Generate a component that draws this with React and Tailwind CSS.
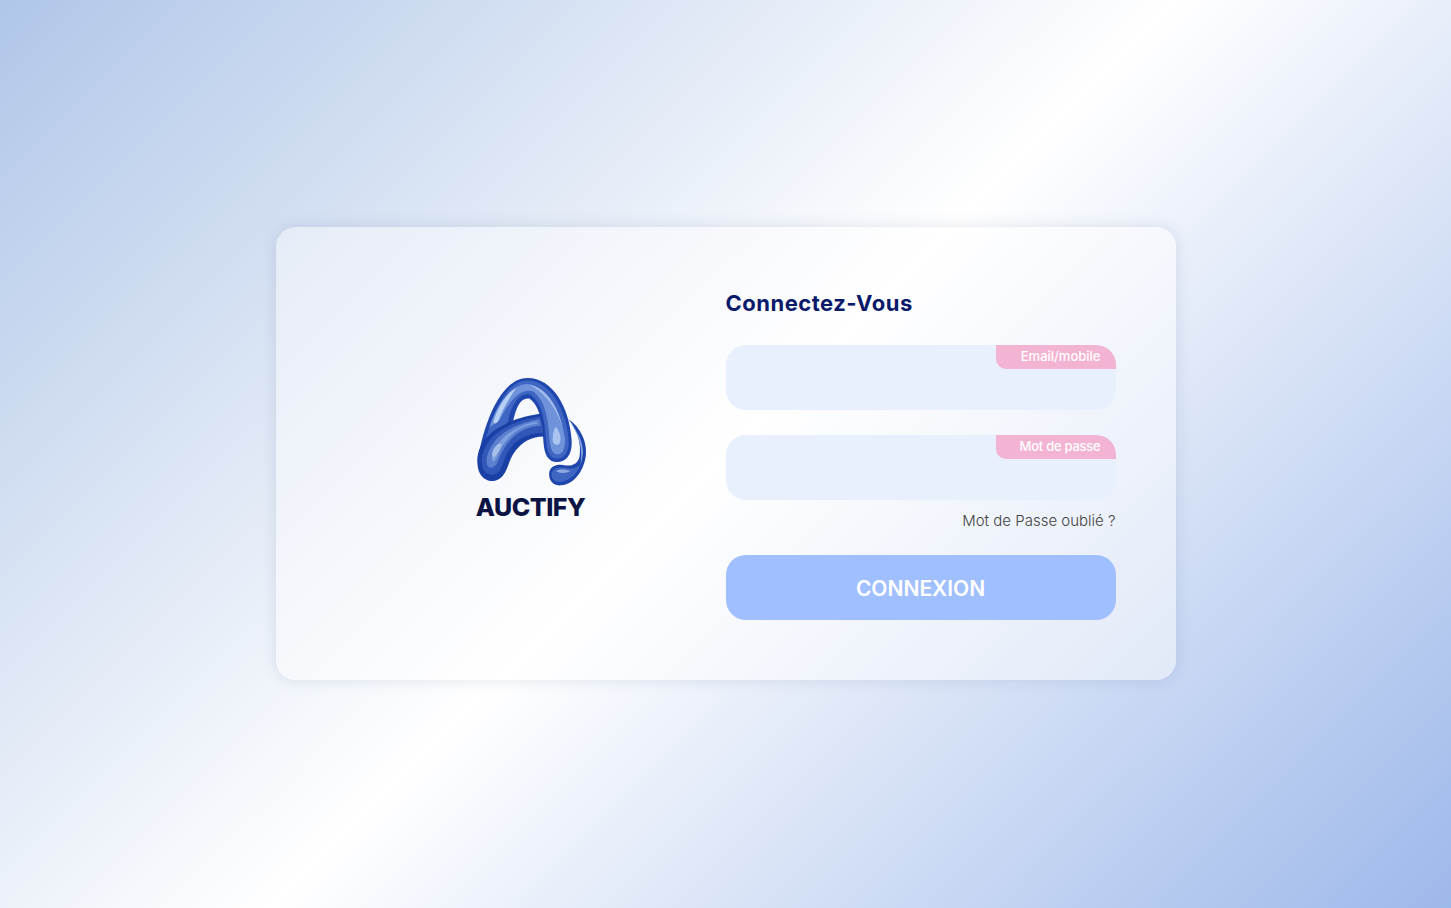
import React from 'react';

const font = "font-['Inter','Noto_Sans',sans-serif]";

const Logo = () => (
  <svg viewBox="0 0 420 370" className="h-[123px] w-[140px]">
    {/* ribbon and drop */}
    <path d="M322 165C358 190 380 235 375 275C370 315 345 360 300 365C272 367 262 345 265 325C270 305 290 300 315 305C335 308 350 300 356 280C362 240 350 200 322 165Z" fill="#1d45ab" />
    <path d="M330 180C352 205 368 240 366 270C364 285 362 295 358 305C366 270 360 220 330 180Z" fill="#8aa6e4" />
    <path d="M272 328C276 312 300 308 325 314C340 316 350 310 358 302C350 330 325 352 298 355C280 356 270 345 272 328Z" fill="#3f66c2" />
    <path d="M285 322C295 315 315 316 330 322C315 330 295 330 285 322Z" fill="#8fa9e3" />
    {/* arch and right leg */}
    <path d="M50 290C65 190 115 42 200 42C275 42 325 130 332 225C336 270 318 295 288 295C262 295 250 272 248 240C245 195 242 130 205 104C178 100 165 130 155 178Z" fill="#1f47ad" />
    <path d="M70 240C90 165 130 50 200 50C265 50 316 135 323 225C326 262 312 285 288 285C268 285 258 265 256 235C252 185 248 120 208 92C170 85 150 130 140 175Z" fill="#3f66c2" />
    <path d="M85 190C105 130 145 62 198 60C250 62 300 140 312 220C314 255 305 272 290 272C275 272 268 255 266 228C262 170 255 110 215 82C175 70 140 120 115 170Z" fill="#6f92db" />
    <path d="M98 170C112 125 140 85 165 72C150 95 125 135 112 170C106 182 96 182 98 170Z" fill="#b7d0f5" />
    <path d="M205 62C250 70 290 120 305 190C285 130 250 85 205 62Z" fill="#a3bcec" />
    <path d="M285 188C298 205 302 225 296 240C288 248 276 243 275 228C275 212 278 198 285 188Z" fill="#a9c5f0" />
    {/* crossbar and left leg, over the arch */}
    <path d="M240 150C190 155 120 178 85 212C50 245 42 287 53 322C64 355 104 362 124 338C144 312 142 287 164 260C184 234 212 218 248 218C252 195 248 170 240 150Z" fill="#1a3fa5" />
    <path d="M238 158C190 163 128 186 96 218C66 248 56 285 64 312C72 335 100 340 115 322C130 302 128 278 150 250C172 222 208 208 246 207C247 190 243 175 238 158Z" fill="#3158b8" />
    <path d="M234 166C190 173 136 194 108 224C84 250 72 282 78 304C84 318 102 314 110 294C122 262 142 226 175 205C195 192 220 187 240 185C238 178 236 172 234 166Z" fill="#5c7fcf" />
    <path d="M226 174C192 180 150 198 124 224C106 244 92 270 92 288C96 298 104 290 108 278C118 252 140 220 172 198C190 188 210 182 230 180Z" fill="#7e9fe0" />
    <path d="M100 252C108 240 118 236 122 242C118 256 108 276 98 280C90 278 92 264 100 252Z" fill="#a6bfe9" />
  </svg>
);

const Field = ({ label, type, labelClass }) => (
  <div className="relative h-[65px] w-full">
    <input
      type={type}
      aria-label={label}
      className="h-full w-full rounded-[20px] bg-[#e8f0fe] px-5 outline-none"
    />
    <span className={`absolute right-0 top-0 flex h-6 w-[120px] items-center justify-end rounded-tr-[20px] rounded-bl-[10px] bg-[#f3b4d3] pr-[15px] text-[13px] font-medium text-white ${labelClass}`}>
      {label}
    </span>
  </div>
);

export default function App() {
  return (
    <div className={`flex min-h-screen items-center justify-center bg-[linear-gradient(135deg,#b0c6e8_0%,#ffffff_50%,#9db8ea_100%)] pb-px ${font}`}>
      <div className="grid w-[900px] grid-cols-2 rounded-[20px] bg-[linear-gradient(135deg,#e6ecf7_0%,#ffffff_50%,#e1e9f8_100%)] p-[60px] shadow-[0_0_15px_rgba(60,80,130,0.14)]">
        <div className="flex flex-col items-center justify-center pb-[21px]">
          <Logo />
          <span className="mt-[5px] text-[25px] font-extrabold leading-[30px] tracking-[-0.5px] text-[#0c1445]">AUCTIFY</span>
        </div>
        <form className="flex flex-col">
          <h1 className="mb-[25px] text-[22px] font-bold leading-[33px] tracking-[0.5px] text-[#0a1a6b]">Connectez-Vous</h1>
          <div className="flex flex-col gap-[25px]">
            <Field label="Email/mobile" type="text" labelClass="" />
            <Field label="Mot de passe" type="password" labelClass="tracking-[-0.25px]" />
          </div>
          <a className="mt-[11px] self-end text-[15px] font-light leading-[20px] text-[#444]">Mot de Passe oublié ?</a>
          <button type="button" className="mt-[24px] h-[65px] w-full rounded-[20px] bg-[#a0bfff] pt-[2px] text-[21px] font-semibold text-white">
            CONNEXION
          </button>
        </form>
      </div>
    </div>
  );
}
